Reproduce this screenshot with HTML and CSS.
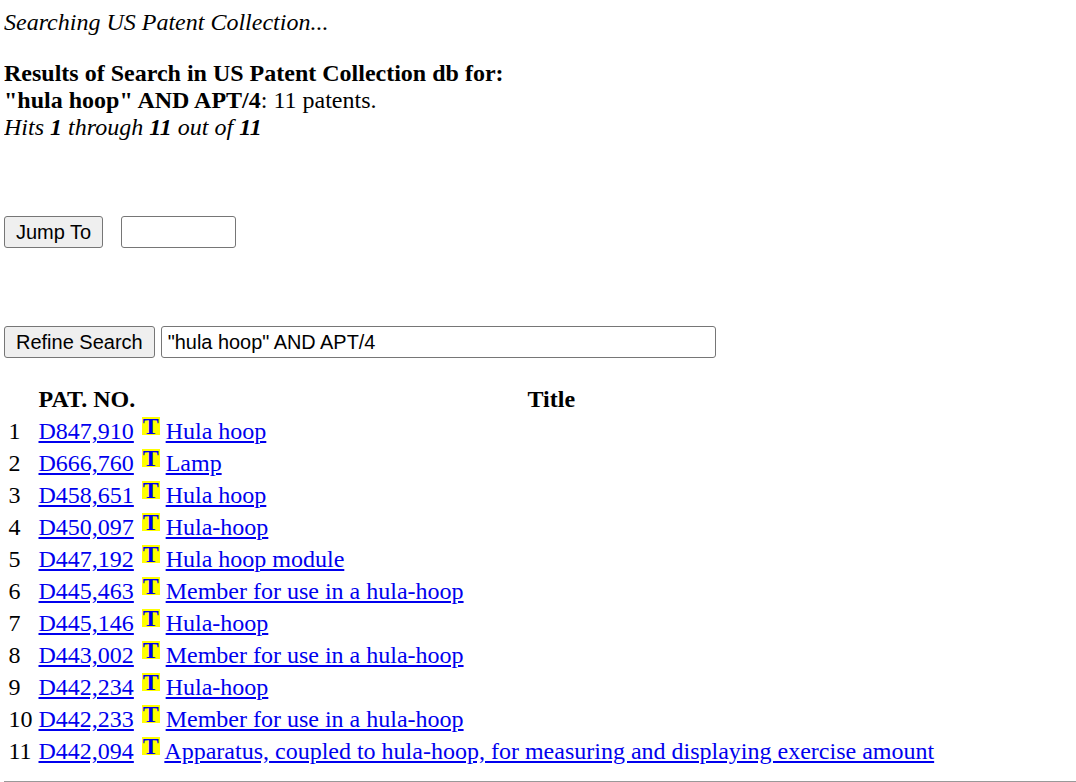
FILE: index.html
```html
<!DOCTYPE html>
<html lang="en">
<head>
    <meta charset="UTF-8">
    <title>Results of Search in US Patent Collection</title>
    <link rel="stylesheet" href="styles.css">
</head>
<body>
    <p class="searching">Searching US Patent Collection...</p>
    <p class="summary">
        <strong>Results of Search in US Patent Collection db for:</strong><br>
        <strong>"hula hoop" AND APT/4</strong>: 11 patents.<br>
        <em>Hits <strong>1</strong> through <strong>11</strong> out of <strong>11</strong></em>
    </p>

    <form class="jump-form">
        <button type="button">Jump To</button>
        <input type="text" class="jump-input">
    </form>

    <form class="refine-form">
        <button type="button">Refine Search</button>
        <input type="text" class="refine-input" value="&quot;hula hoop&quot; AND APT/4">
    </form>

    <table class="results">
        <thead>
            <tr>
                <th class="narrow"></th>
                <th class="narrow">PAT. NO.</th>
                <th>Title</th>
            </tr>
        </thead>
        <tbody>
            <tr>
                <td>1</td>
                <td><a href="#">D847,910</a></td>
                <td><span class="t-icon">T</span> <a href="#">Hula hoop</a></td>
            </tr>
            <tr>
                <td>2</td>
                <td><a href="#">D666,760</a></td>
                <td><span class="t-icon">T</span> <a href="#">Lamp</a></td>
            </tr>
            <tr>
                <td>3</td>
                <td><a href="#">D458,651</a></td>
                <td><span class="t-icon">T</span> <a href="#">Hula hoop</a></td>
            </tr>
            <tr>
                <td>4</td>
                <td><a href="#">D450,097</a></td>
                <td><span class="t-icon">T</span> <a href="#">Hula-hoop</a></td>
            </tr>
            <tr>
                <td>5</td>
                <td><a href="#">D447,192</a></td>
                <td><span class="t-icon">T</span> <a href="#">Hula hoop module</a></td>
            </tr>
            <tr>
                <td>6</td>
                <td><a href="#">D445,463</a></td>
                <td><span class="t-icon">T</span> <a href="#">Member for use in a hula-hoop</a></td>
            </tr>
            <tr>
                <td>7</td>
                <td><a href="#">D445,146</a></td>
                <td><span class="t-icon">T</span> <a href="#">Hula-hoop</a></td>
            </tr>
            <tr>
                <td>8</td>
                <td><a href="#">D443,002</a></td>
                <td><span class="t-icon">T</span> <a href="#">Member for use in a hula-hoop</a></td>
            </tr>
            <tr>
                <td>9</td>
                <td><a href="#">D442,234</a></td>
                <td><span class="t-icon">T</span> <a href="#">Hula-hoop</a></td>
            </tr>
            <tr>
                <td>10</td>
                <td><a href="#">D442,233</a></td>
                <td><span class="t-icon">T</span> <a href="#">Member for use in a hula-hoop</a></td>
            </tr>
            <tr>
                <td>11</td>
                <td><a href="#">D442,094</a></td>
                <td><span class="t-icon">T</span> <a href="#">Apparatus, coupled to hula-hoop, for measuring and displaying exercise amount</a></td>
            </tr>
        </tbody>
    </table>
    <hr>
</body>
</html>
```

FILE: styles.css
```css
body {
    font-family: "Liberation Serif", "Times New Roman", serif;
    font-size: 24px;
    line-height: 27px;
    margin: 9px 0 0 4px;
    color: #000;
}
p {
    margin: 0;
}
.searching {
    font-style: italic;
    margin-bottom: 24px;
}
.summary {
    margin-bottom: 75px;
}
button, input {
    font-family: "Liberation Sans", Arial, sans-serif;
    font-size: 20px;
    height: 32px;
    box-sizing: border-box;
    margin: 0;
    border-radius: 3px;
}
button {
    background-color: #efefef;
    border: 1px solid #767676;
    padding: 0 11px;
    color: #000;
}
input {
    border: 1px solid #767676;
    padding: 0 6px;
    background-color: #fff;
    color: #000;
}
.jump-form {
    display: flex;
    gap: 18px;
    margin-bottom: 78px;
}
.jump-input {
    width: 115px;
}
.refine-form {
    display: flex;
    gap: 6px;
    margin-bottom: 24px;
}
.refine-input {
    width: 555px;
    font-size: 19.9px;
}
.results {
    border-spacing: 3px;
    width: 962px;
}
.results th, .results td {
    padding: 1px 1.5px;
    white-space: nowrap;
}
.results th.narrow {
    width: 1px;
}
.results td {
    text-align: left;
}
a {
    color: #0000ee;
}
.t-icon {
    display: inline-block;
    width: 18px;
    height: 18px;
    line-height: 19px;
    margin: -1px 0 0 0.5px;
    background-color: #ffff00;
    color: #0000ee;
    font-weight: bold;
    font-size: 24px;
    text-align: center;
    vertical-align: top;
}
hr {
    margin: 12px 0 0;
    border: none;
    border-top: 1px solid #999;
    border-bottom: 1px solid #eee;
}
```
